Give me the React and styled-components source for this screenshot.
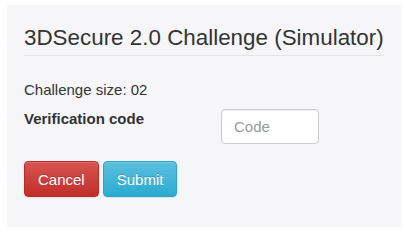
import React from 'react';
import styled, { createGlobalStyle } from 'styled-components';

const GlobalStyle = createGlobalStyle`
  html, body {
    margin: 0;
    padding: 0;
    background: #fff;
  }

  body {
    font-family: "Liberation Sans", Arial, Helvetica, sans-serif;
    color: #333;
  }

  * {
    box-sizing: border-box;
  }
`;

const Page = styled.div`
  padding: 5px 4px 0 7px;
`;

const Panel = styled.div`
  background: #f6f6f9;
  padding: 21px 17px 30px;
  min-height: 222px;
`;

const Title = styled.h3`
  margin: 0;
  padding-bottom: 4px;
  font-size: 22.4px;
  font-weight: 400;
  line-height: 1.1;
  color: #333;
  border-bottom: 1px solid #e3e3e6;
`;

const Info = styled.p`
  margin: 23px 0 0;
  font-size: 15px;
  line-height: 1.42857;
`;

const FormRow = styled.div`
  display: flex;
  align-items: flex-start;
  margin-top: 8px;
`;

const Label = styled.label`
  width: 197px;
  font-size: 15px;
  font-weight: 700;
  line-height: 1.42857;
`;

const Input = styled.input`
  width: 98px;
  height: 35px;
  margin-top: 1px;
  padding: 6px 12px;
  font-family: inherit;
  font-size: 15px;
  color: #555;
  background: #fff;
  border: 1px solid #ccc;
  border-radius: 4px;
  box-shadow: inset 0 1px 1px rgba(0, 0, 0, 0.075);
  outline: none;

  &::placeholder {
    color: #999;
  }
`;

const Actions = styled.div`
  display: flex;
  gap: 4px;
  margin-top: 17px;
`;

const tones = {
  danger: { from: '#d9534f', to: '#c12e2a', border: '#b92c28' },
  info: { from: '#5bc0de', to: '#2aabd2', border: '#28a4c9' },
};

const Button = styled.button`
  height: 36px;
  padding: 0 13px;
  font-family: inherit;
  font-size: 15px;
  color: #fff;
  text-shadow: 0 -1px 0 rgba(0, 0, 0, 0.2);
  background: linear-gradient(${p => tones[p.$tone].from}, ${p => tones[p.$tone].to});
  border: 1px solid ${p => tones[p.$tone].border};
  border-radius: 4px;
  box-shadow: inset 0 1px 0 rgba(255, 255, 255, 0.15), 0 1px 1px rgba(0, 0, 0, 0.075);
  cursor: pointer;
`;

export default function App() {
  return (
    <Page>
      <GlobalStyle />
      <Panel>
        <Title>3DSecure 2.0 Challenge (Simulator)</Title>
        <Info>Challenge size: 02</Info>
        <FormRow>
          <Label htmlFor="code">Verification code</Label>
          <Input id="code" type="text" placeholder="Code" />
        </FormRow>
        <Actions>
          <Button $tone="danger">Cancel</Button>
          <Button $tone="info">Submit</Button>
        </Actions>
      </Panel>
    </Page>
  );
}
